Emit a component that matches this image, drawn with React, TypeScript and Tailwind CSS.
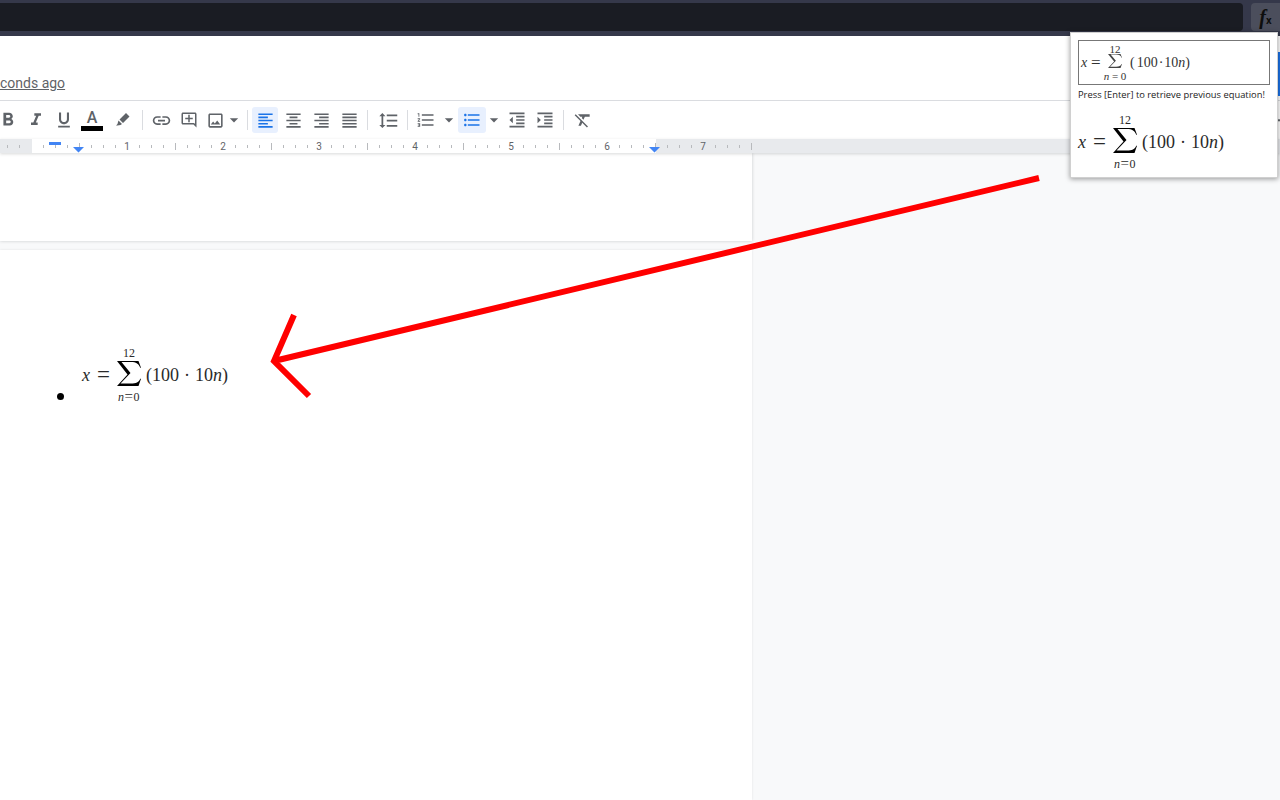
import {
  MdArrowDropDown,
  MdFormatAlignCenter,
  MdFormatAlignJustify,
  MdFormatAlignLeft,
  MdFormatAlignRight,
  MdFormatBold,
  MdFormatClear,
  MdFormatIndentDecrease,
  MdFormatIndentIncrease,
  MdFormatItalic,
  MdFormatLineSpacing,
  MdFormatListBulleted,
  MdFormatListNumbered,
  MdFormatUnderlined,
  MdKeyboardArrowDown,
  MdLink,
  MdOutlineAddComment,
  MdOutlineImage,
} from "react-icons/md";
import type { ReactNode } from "react";

const serif = "font-['Liberation_Serif',serif]";

function Sigma({ className }: { className: string }) {
  return (
    <svg viewBox="0 0 24 26" preserveAspectRatio="none" className={className}>
      <path d="M0 0H21.500L24 7H23.200C22 3 19 1 14 1H4.500L13.500 12.500L3.500 23.500H14C19 23.500 22 22 23.200 18.500H24L21.500 26H0L10.500 14z" fill="currentColor" />
    </svg>
  );
}

// the rendered equation, same size in the doc and in the preview
function Equation() {
  return (
    <div className={`${serif} flex items-center text-[#2a2a2a] text-[18px] leading-none`}>
      <span className="italic w-[15px]">x</span>
      <span className="w-[20px] text-[23px] leading-[18px]">=</span>
      <div className="flex flex-col items-center w-[24px]">
        <span className="text-[12px] leading-[12px] mb-[2px]">12</span>
        <Sigma className="w-[24px] h-[25px] text-black" />
        <span className="text-[12px] leading-[12px] mt-[4px] whitespace-nowrap tracking-[0.5px]">
          <i>n</i><span className="text-[15px] leading-[12px]">=</span>0
        </span>
      </div>
      <span className="ml-[5px] whitespace-nowrap">
        (100<span className="mx-[5px]">·</span>10<i>n</i>)
      </span>
    </div>
  );
}

function Ruler() {
  const ticks: number[] = [];
  for (let x = 7; x < 752; x += 12) ticks.push(x);
  const labels = [1, 2, 3, 4, 5, 6, 7];
  return (
    <svg width="752" height="14" className="block">
      <rect x="32" y="0" width="624" height="14" fill="#fff" />
      {ticks.map((x) => {
        const off = x - 31;
        const inch = off % 96 === 0;
        const half = off % 48 === 0 && !inch;
        if (inch && x !== 751) return null;
        return (
          <line key={x} x1={x + 0.5} x2={x + 0.5} y1={half || inch ? 4 : 6} y2={half || inch ? 11 : 9} stroke="#b8babd" />
        );
      })}
      {labels.map((n) => (
        <text key={n} x={31 + 96 * n} y="11" textAnchor="middle" fontSize="10" fontFamily="Roboto, sans-serif" fill="#5f6368">
          {n}
        </text>
      ))}
      <rect x="49" y="3" width="12" height="3" fill="#4285f4" />
      <path d="M73 8h11l-5.500 5.500zM649 8h11l-5.500 5.500z" fill="#4285f4" />
    </svg>
  );
}

function Btn({ children, active, w = "w-[28px]" }: { children: ReactNode; active?: boolean; w?: string }) {
  return (
    <div className={`${w} h-[26px] shrink-0 flex items-center justify-center rounded-[3px] ${active ? "bg-[#e8f0fe] text-[#1a73e8]" : "text-[#5f6368]"}`}>
      {children}
    </div>
  );
}

function Sep({ className = "mx-[4px]" }: { className?: string }) {
  return <div className={`w-px h-[20px] bg-[#dadce0] shrink-0 ${className}`} />;
}

function Caret({ className = "-ml-[3px]" }: { className?: string }) {
  return <MdArrowDropDown size={20} className={`shrink-0 text-[#5f6368] ${className}`} />;
}

function Toolbar() {
  return (
    <div className="h-[38px] flex items-center -ml-[6px]">
      <Btn><MdFormatBold size={22} /></Btn>
      <Btn><MdFormatItalic size={20} /></Btn>
      <Btn><MdFormatUnderlined size={20} /></Btn>
      <Btn>
        <div className="flex flex-col items-center">
          <span className="font-['Roboto',sans-serif] text-[16px] leading-[17px] font-medium">A</span>
          <span className="w-[22px] h-[5px] bg-black" />
        </div>
      </Btn>
      <Btn>
        <svg viewBox="0 0 18 18" className="w-[18px] h-[18px] ml-[4px]" fill="currentColor">
          <path d="M13 2l3.500 3.500-6.500 6.500-3.500-3.500zM5.500 9.500l3.500 3.500-1.500 1-3 .5-1.500 0 1.500-1.500.5-2z" />
        </svg>
      </Btn>
      <Sep className="ml-[8px] mr-[4px]" />
      <Btn><MdLink size={21} /></Btn>
      <Btn><MdOutlineAddComment size={18} /></Btn>
      <div className="flex items-center w-[36px]">
        <Btn w="w-[24px]"><MdOutlineImage size={19} /></Btn>
        <Caret />
      </div>
      <Sep className="ml-[8px] mr-[4px]" />
      <Btn active w="w-[26px]"><MdFormatAlignLeft size={19} /></Btn>
      <div className="w-[1px] shrink-0" />
      <Btn><MdFormatAlignCenter size={19} /></Btn>
      <Btn><MdFormatAlignRight size={19} /></Btn>
      <Btn><MdFormatAlignJustify size={19} /></Btn>
      <Sep className="ml-[4px] mr-[6px]" />
      <Btn><MdFormatLineSpacing size={21} /></Btn>
      <Sep className="ml-[5px] mr-[4px]" />
      <div className="flex items-center w-[45px]">
        <Btn><MdFormatListNumbered size={20} /></Btn>
        <Caret className="-ml-[1px]" />
      </div>
      <div className="flex items-center w-[45px] ml-[1px]">
        <Btn active><MdFormatListBulleted size={20} /></Btn>
        <Caret className="-ml-[2px]" />
      </div>
      <Btn><MdFormatIndentDecrease size={20} /></Btn>
      <Btn><MdFormatIndentIncrease size={20} /></Btn>
      <Sep className="ml-[4px] mr-[5px]" />
      <Btn><MdFormatClear size={20} /></Btn>
    </div>
  );
}

function EquationPopup() {
  return (
    <div className="absolute z-20 left-[1070px] top-[32px] w-[208px] h-[146px] bg-white border border-[#d0d0d0] shadow-[0_1px_5px_rgba(0,0,0,0.4)] px-[7px] pt-[7px]">
      <div className={`${serif} h-[45px] border border-[#777] flex items-center pl-[2px] text-[14px] leading-none text-[#333]`}>
        <span className="italic w-[10px]">x</span>
        <span className="w-[12px] text-[17px] leading-[14px]">=</span>
        <div className="flex flex-col items-center w-[24px] text-[11px] leading-[10px]">
          <span>12</span>
          <Sigma className="w-[14px] h-[14px] text-[#444]" />
          <span className="whitespace-nowrap mt-[3px]"><i>n</i> = 0</span>
        </div>
        <span className="ml-[3px] text-[14px] whitespace-nowrap">
          (<span className="ml-[2px]">100</span><span className="mx-[1px]">·</span>10<i>n</i>)
        </span>
      </div>
      <div className="font-['Open_Sans',sans-serif] text-[9.350px] leading-[12px] mt-[4px] text-[#222] whitespace-nowrap">
        Press [Enter] to retrieve previous equation!
      </div>
      <div className="mt-[13px]">
        <Equation />
      </div>
    </div>
  );
}

export default function App() {
  return (
    <div className="relative w-[1280px] h-[800px] overflow-hidden bg-[#f8f9fa] flex flex-col">
      {/* browser chrome */}
      <div className="h-[36px] shrink-0 bg-[#35384a] flex items-start pt-[3px] gap-[8px]">
        <div className="h-[28px] flex-1 bg-[#1a1c23] rounded-r-[4px]" />
        <div className="w-[29px] h-[28px] bg-[#4b4e5c] rounded-l-[4px] flex items-center justify-center">
          <span className={`${serif} italic font-bold text-[#0e0e0e] text-[20px] leading-none`}>
            f<span className="text-[11px] not-italic font-['Roboto',sans-serif]">x</span>
          </span>
        </div>
      </div>

      {/* docs header */}
      <div className="bg-white shrink-0">
        <div className="h-[64px] flex items-end pb-[7px]">
          <span className="font-['Roboto',sans-serif] text-[14px] leading-[20px] text-[#5f6368] underline">conds ago</span>
        </div>
        <div className="border-t border-[#dadce0]">
          <Toolbar />
        </div>
      </div>

      {/* ruler */}
      <div className="h-[14px] shrink-0 bg-[#e8eaed] shadow-[0_1px_3px_rgba(60,64,67,0.2)] z-10">
        <Ruler />
      </div>

      {/* doc canvas */}
      <div className="flex-1 w-[752px] flex flex-col min-h-0">
        <div className="h-[88px] shrink-0 bg-white shadow-[0_0_3px_rgba(60,64,67,0.25)]" />
        <div className="flex-1 mt-[9px] bg-white shadow-[0_0_2px_rgba(60,64,67,0.12)] flex items-start gap-[18px] pl-[57px] pt-[97px]">
          <span className="w-[7px] h-[7px] rounded-full bg-black mt-[46px] shrink-0" />
          <Equation />
        </div>
      </div>

      {/* annotation arrow */}
      <svg className="absolute z-10 inset-0 pointer-events-none" width="1280" height="800">
        <path d="M1039 178L274 361M294 315L274 361L309 396" stroke="#ff0000" strokeWidth="6" fill="none" />
      </svg>

      <div className="absolute right-0 top-[52px] w-[2px] h-[44px] bg-[#1a73e8]" />
      <MdKeyboardArrowDown size={16} className="absolute left-[1271px] top-[111px] text-[#5f6368]" />
      <EquationPopup />
    </div>
  );
}
